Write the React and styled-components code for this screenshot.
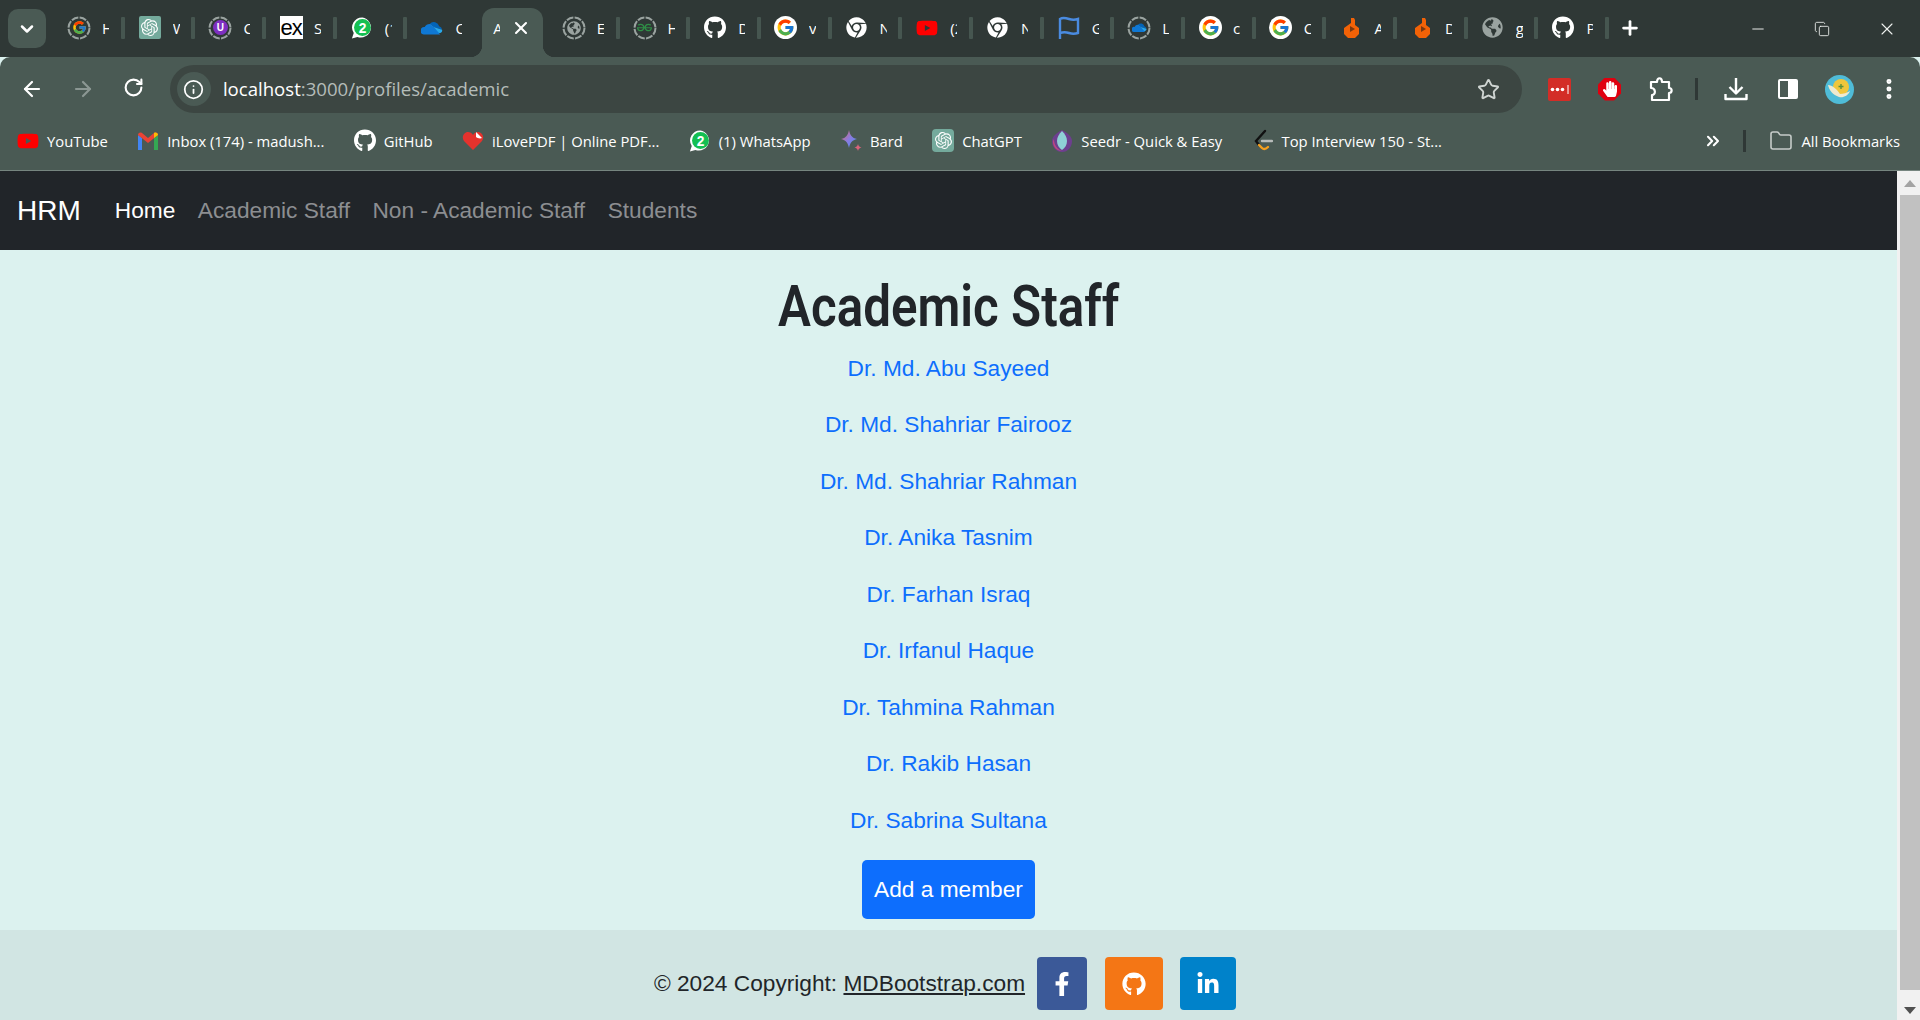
import React from "react";
import styled, { createGlobalStyle } from "styled-components";
import { FaChrome, FaFacebookF, FaGithub, FaLinkedinIn, FaGlobeAmericas, FaHandPaper, FaYoutube } from "react-icons/fa";
import { FcGoogle } from "react-icons/fc";
import { SiOpenai, SiGeeksforgeeks } from "react-icons/si";
import { ChevronDown, X, Plus, Minus, ArrowLeft, ArrowRight, RotateCw, Info, Star, MoreVertical, ChevronsRight, Folder, Copy } from "lucide-react";

const GlobalStyle = createGlobalStyle`
  html, body {
    margin: 0;
    height: 100%;
    overflow: hidden;
  }
  body {
    font-family: "Liberation Sans", Arial, sans-serif;
    background: #dcf2ef;
  }
  * { box-sizing: border-box; }
`;

const Page = styled.div`
  display: flex;
  flex-direction: column;
  height: 1020px;
`;

/* tab strip */
const TabStrip = styled.div`
  display: flex;
  align-items: flex-end;
  height: 57px;
  background: #2f3836;
  padding-left: 8px;
  color: #fff;
`;

const TabMenu = styled.div`
  width: 38px;
  height: 39px;
  margin: 0 8px 9px 0;
  border-radius: 10px;
  background: #4a5a54;
  display: flex;
  align-items: center;
  justify-content: center;
`;

const Tab = styled.div`
  width: 70.7px;
  height: 49px;
  display: flex;
  align-items: center;
  padding: 0 0 10px 14px;
  position: relative;
  &::after {
    content: "";
    display: ${(p) => (p.$nosep ? "none" : "block")};
    position: absolute;
    right: 0;
    top: 9px;
    width: 4px;
    height: 22px;
    border-radius: 1px;
    background: #465650;
  }
`;

const ActiveTab = styled.div`
  width: 61px;
  height: 49px;
  margin: 0 5.7px 0 4px;
  background: #4a5a54;
  border-radius: 12px 12px 0 0;
  display: flex;
  align-items: center;
  padding: 0 0 10px 11px;
  gap: 11px;
  position: relative;
  &::before, &::after {
    content: "";
    position: absolute;
    bottom: 0;
    width: 12px;
    height: 12px;
  }
  &::before { left: -12px; background: radial-gradient(circle at 0 0, transparent 12px, #4a5a54 12.5px); }
  &::after { right: -12px; background: radial-gradient(circle at 100% 0, transparent 12px, #4a5a54 12.5px); }
`;

const TabIconBox = styled.span`
  width: 22px;
  height: 22px;
  flex: none;
  display: flex;
  align-items: center;
  justify-content: center;
  position: relative;
`;

const TabLabel = styled.span`
  width: 7px;
  margin-left: 12px;
  overflow: hidden;
  white-space: nowrap;
  font: 15px "Open Sans", sans-serif;
  color: #fff;
`;

const ActiveLabel = styled(TabLabel)`
  margin-left: 0;
`;

const WhiteDisc = styled.span`
  width: 23px;
  height: 23px;
  flex: none;
  border-radius: 50%;
  background: #fff;
  display: flex;
  align-items: center;
  justify-content: center;
`;

const GptSquare = styled.span`
  width: 22px;
  height: 23px;
  flex: none;
  border-radius: ${(p) => p.$r || 2}px;
  background: #74aa9c;
  display: flex;
  align-items: center;
  justify-content: center;
  color: #fff;
`;

const ExSquare = styled.span`
  width: 23px;
  height: 23px;
  flex: none;
  background: #fff;
  color: #000;
  font: 22px/23px "Liberation Sans", sans-serif;
  letter-spacing: -1px;
  text-align: center;
`;

const PurpleBadge = styled.span`
  width: 15px;
  height: 15px;
  border-radius: 50%;
  background: #7e2fc0;
  color: #fff;
  font: bold 10px/15px "Liberation Sans", sans-serif;
  text-align: center;
`;

const Ring = styled.svg`
  position: absolute;
  left: -1px;
  top: -1px;
`;

const TabSpacer = styled.div`
  flex: 1;
`;

const NewTab = styled.div`
  display: flex;
  padding: 0 0 18px 10px;
`;

const WindowButtons = styled.div`
  display: flex;
  align-items: center;
  gap: 47px;
  height: 57px;
  padding: 0 23px 0 0;
  align-self: flex-start;
`;

/* toolbar */
const Toolbar = styled.div`
  display: flex;
  align-items: center;
  height: 56px;
  background: #4a5a54;
  border-radius: 10px 10px 0 0;
  padding-top: 8px;
`;

const NavButton = styled.span`
  width: 51px;
  display: flex;
  justify-content: center;
  color: ${(p) => (p.$dim ? "#8b9793" : "#fff")};
`;

const NavButtons = styled.div`
  display: flex;
  width: 170px;
  padding-left: 6px;
`;

const Omnibox = styled.div`
  width: 1353px;
  height: 48px;
  border-radius: 24px;
  background: #3c4642;
  display: flex;
  align-items: center;
  padding: 0 22px 0 7px;
`;

const InfoChip = styled.span`
  width: 34px;
  height: 34px;
  border-radius: 50%;
  background: #4a5a54;
  display: flex;
  align-items: center;
  justify-content: center;
  color: #fff;
`;

const Url = styled.div`
  flex: 1;
  margin: 0 0 2px 12px;
  font: 18.6px "Open Sans", sans-serif;
  color: #b4bcb9;
  b { font-weight: 400; color: #fff; }
`;

const Extensions = styled.div`
  flex: 1;
  display: flex;
  align-items: center;
  padding-left: 25px;
`;

const ExtSlot = styled.span`
  width: ${(p) => p.$w}px;
  flex: none;
  display: flex;
  justify-content: center;
  align-items: center;
  color: #fff;
`;

const AdBlock = styled.span`
  width: 23px;
  height: 23px;
  background: #e0000f;
  clip-path: polygon(30% 0, 70% 0, 100% 30%, 100% 70%, 70% 100%, 30% 100%, 0 70%, 0 30%);
  display: flex;
  align-items: center;
  justify-content: center;
  color: #fff;
`;

const Divider = styled.span`
  width: 3px;
  height: 22px;
  flex: none;
  background: #2f3836;
`;

const SidePanel = styled.span`
  width: 20px;
  height: 20px;
  border: 2px solid #fff;
  border-radius: 2px;
  background: linear-gradient(90deg, transparent 50%, #fff 50%);
`;

/* bookmarks */
const Bookmarks = styled.div`
  display: flex;
  align-items: center;
  height: 58px;
  background: #4a5a54;
  border-bottom: 1px solid #76857f;
  padding: 0 20px 2px 17px;
  color: #fff;
  font: 14.8px "Open Sans", sans-serif;
  gap: 29.4px;
`;

const Bookmark = styled.div`
  display: flex;
  align-items: center;
  gap: 8px;
  white-space: nowrap;
`;

const BookmarkIcon = styled.span`
  width: 22px;
  height: 22px;
  flex: none;
  display: flex;
  align-items: center;
  justify-content: center;
`;

const BookmarkEnd = styled.div`
  margin-left: auto;
  display: flex;
  align-items: center;
  gap: 10px;
`;

const MoreBookmarks = styled.span`
  display: flex;
  margin-right: -4px;
`;

/* page body */
const Viewport = styled.div`
  flex: 1;
  display: flex;
  min-height: 0;
`;

const Content = styled.div`
  flex: 1;
  display: flex;
  flex-direction: column;
`;

const Navbar = styled.nav`
  height: 79px;
  background: #212529;
  display: flex;
  align-items: center;
  padding-left: 17px;
`;

const Brand = styled.a`
  font-size: 28px;
  color: #fff;
  margin-right: 34px;
`;

const NavItems = styled.div`
  display: flex;
  gap: 22.5px;
`;

const NavItem = styled.a`
  font-size: 22.7px;
  color: ${(p) => (p.$active ? "#fff" : "#8c8e91")};
`;

const Main = styled.main`
  flex: 1;
  background: #dcf2ef;
  display: flex;
  flex-direction: column;
  align-items: center;
`;

const Title = styled.h1`
  margin: 21px 0 0;
  font: 600 58px/70px Roboto, sans-serif;
  color: #212529;
  transform: scaleX(0.85);
`;

const StaffList = styled.div`
  display: flex;
  flex-direction: column;
  align-items: center;
  margin-top: 12px;
`;

const StaffLink = styled.a`
  height: 56.45px;
  font-size: 22.7px;
  line-height: 30px;
  color: #0d6efd;
`;

const AddButton = styled.button`
  width: 173px;
  height: 59px;
  margin-top: -1px;
  border: 0;
  border-radius: 5px;
  background: #0d6efd;
  color: #fff;
  font: 22.7px "Liberation Sans", sans-serif;
`;

const Footer = styled.footer`
  height: 90px;
  background: #d1e5e3;
  display: flex;
  align-items: center;
  justify-content: center;
  padding: 17px 7px 0 0;
  color: #212529;
  font-size: 22.7px;
  a { color: #212529; text-decoration: underline; }
`;

const Social = styled.span`
  width: ${(p) => p.$w}px;
  height: 53px;
  margin-left: ${(p) => p.$ml}px;
  border-radius: 4px;
  background: ${(p) => p.$bg};
  color: #fff;
  display: flex;
  align-items: center;
  justify-content: center;
`;

const Scrollbar = styled.div`
  width: 23px;
  background: #f1f1f1;
  display: flex;
  flex-direction: column;
  align-items: center;
  padding: 9px 0 0 2px;
`;

const ScrollUp = styled.span`
  width: 0;
  height: 0;
  border-left: 6px solid transparent;
  border-right: 6px solid transparent;
  border-bottom: 7px solid #a3a3a3;
`;

const ScrollThumb = styled.div`
  width: 20px;
  flex: 1;
  margin: 8px 0 17px;
  background: #c1c1c1;
`;

const ScrollDown = styled.span`
  width: 0;
  height: 0;
  margin-bottom: 6px;
  border-left: 6px solid transparent;
  border-right: 6px solid transparent;
  border-top: 7px solid #505050;
`;

function Ringed({ children }) {
  return (
    <TabIconBox>
      <Ring width="24" height="24" viewBox="0 0 24 24" fill="none">
        <circle cx="12" cy="12" r="10.5" stroke="#9aa3a0" strokeWidth="2" strokeDasharray="7 1.3" />
      </Ring>
      {children}
    </TabIconBox>
  );
}

const Google = () => <WhiteDisc><FcGoogle size={19} /></WhiteDisc>;

function Cloud({ size = 22 }) {
  return (
    <svg width={size} height={size} viewBox="0 0 24 24">
      <path d="M9.5 7.500a6 6 0 0 1 10.300 2.600A4.500 4.500 0 0 1 23 14l-9-3z" fill="#0364b8" />
      <path d="M9.500 7.500 14 11l9 3c.6 1.600-.4 3-2 3.500H12z" fill="#28a8ea" />
      <path d="M9.500 7.500A6.500 6.500 0 0 0 4 11a4 4 0 0 0-1 8h18L14 11z" fill="#0f78d4" />
    </svg>
  );
}

function Whats({ size = 24 }) {
  return (
    <svg width={size} height={size} viewBox="0 0 24 24">
      <path d="M12.500 .5A11 11 0 0 0 3 17.500L1 23.500l6-1.800A11 11 0 1 0 12.500 .5z" fill="#fff" />
      <circle cx="12.500" cy="11.500" r="9.200" fill="#14bf52" />
      <text x="12.500" y="17" textAnchor="middle" fontSize="15" fontWeight="700" fontFamily="Liberation Sans" fill="#fff">2</text>
    </svg>
  );
}

function OrangeBolt() {
  return (
    <svg width="15" height="20" viewBox="0 0 15 20">
      <path d="M7 0h3l1 2v5l4 3v6l-4 4H4l-4-4v-6l7-5z" fill="#f26207" />
      <path d="M6 8l5 3-5 3z" fill="#7a3810" />
    </svg>
  );
}

function Flag() {
  return (
    <svg width="22" height="24" viewBox="0 0 22 24" fill="none" stroke="#4a8be0" strokeWidth="2.4">
      <path d="M2 23V3c3-2 6-1 9 0s6 1 9 0v14c-3 1-6 1-9 0s-6-1-9 0" />
    </svg>
  );
}

function Gmail() {
  return (
    <svg width="22" height="18" viewBox="0 0 22 18" fill="none">
      <path d="M1 18V3l4 3v12z" fill="#4285f4" />
      <path d="M21 18V3l-4 3v12z" fill="#34a853" />
      <path d="M1 3c0-2 2-3 4-2l6 5 6-5c2-1 4 0 4 2l-10 8z" fill="#ea4335" />
      <path d="M17 1c2-1 4 0 4 2l-4 3z" fill="#fbbc04" />
    </svg>
  );
}

function Bard() {
  return (
    <svg width="22" height="24" viewBox="0 0 22 24">
      <defs>
        <linearGradient id="bard" x1="0" y1="0" x2="1" y2="1">
          <stop offset="0" stopColor="#e0695c" />
          <stop offset="0.5" stopColor="#8a7be0" />
          <stop offset="1" stopColor="#4b8ff0" />
        </linearGradient>
      </defs>
      <path d="M9 1c1 5 3 8 8 9-5 1-7 4-8 9-1-5-3-8-8-9 5-1 7-4 8-9z" fill="url(#bard)" />
      <path d="M18 15c.4 2 1.400 3 3.500 3.500-2.100.5-3.100 1.500-3.500 3.500-.4-2-1.400-3-3.500-3.500 2.100-.5 3.100-1.500 3.500-3.500z" fill="#d8637a" />
    </svg>
  );
}

function Seedr() {
  return (
    <svg width="20" height="22" viewBox="0 0 20 22">
      <path d="M10 0c6 3 10 7 10 11 0 6-4 11-10 11S0 17 0 11C0 7 4 3 10 0z" fill="#6d3f8f" />
      <path d="M2 9c0 6 3 10 8 12-5 0-9-4-9-9 0-1 .4-2 1-3z" fill="#c0487f" />
      <path d="M10 1c3 3 5 6 5 10 0 4-2 7-5 9-3-2-5-5-5-9 0-4 2-7 5-10z" fill="#8fd0d6" />
    </svg>
  );
}

function PdfHeart() {
  return (
    <svg width="22" height="20" viewBox="0 0 22 20">
      <path d="M11 19L2 10C-1 6 2 1 6 1c2 0 4 1 5 3 1-2 3-3 5-3 4 0 7 5 4 9z" fill="#e5322d" />
      <path d="M14 1l6 6c-2 1-5 0-6-1z" fill="#fff" />
    </svg>
  );
}

function LeetCode() {
  return (
    <svg width="20" height="24" viewBox="0 0 20 24" fill="none" strokeWidth="2.4" strokeLinecap="round">
      <path d="M12 2L3 12l3 4" stroke="#111" />
      <path d="M6 16l3 3c2 2 4 1 6-1" stroke="#f7a01e" />
      <path d="M9 12h10" stroke="#b8bcba" />
    </svg>
  );
}

function LastPass() {
  return (
    <svg width="23" height="23" viewBox="0 0 23 23">
      <rect width="23" height="23" rx="2" fill="#d32d27" />
      <circle cx="4.500" cy="11.500" r="1.800" fill="#fff" />
      <circle cx="9.500" cy="11.500" r="1.800" fill="#fff" />
      <circle cx="14.500" cy="11.500" r="1.800" fill="#fff" />
      <path d="M20 7v9" stroke="#fff" strokeWidth="1" />
    </svg>
  );
}

function ExtensionIcon() {
  return (
    <svg width="25" height="26" viewBox="0 0 25 26" fill="none" stroke="#fff" strokeWidth="2.2" strokeLinejoin="round">
      <path d="M2 6h6c0-5 5-5 5 0h7v6c3.500 0 3.500 5 0 5v7H3v-5c4 0 4-7-1-7z" />
    </svg>
  );
}

function DownloadIcon() {
  return (
    <svg width="24" height="24" viewBox="0 0 24 24" fill="none" stroke="#fff" strokeWidth="2.400" strokeLinejoin="round">
      <path d="M12 1v15M5.500 10l6.500 6.500 6.500-6.500M1.500 17v5h21v-5" />
    </svg>
  );
}

function Avatar() {
  return (
    <svg width="29" height="29" viewBox="0 0 29 29">
      <circle cx="14.500" cy="14.500" r="14.500" fill="#4fbcd8" />
      <circle cx="16" cy="12" r="8" fill="#f0c63a" />
      <path d="M3 10c4 0 9 4 12 9 3 0 7-1 10-3-2 5-7 7-11 6C8 20 4 15 3 10z" fill="#efe9cf" />
      <path d="M16 9v5M13.500 11.500h5" stroke="#5a8f3a" strokeWidth="1.400" />
    </svg>
  );
}

const tabs = [
  { icon: <Ringed><FcGoogle size={15} /></Ringed>, label: "How" },
  { icon: <GptSquare><SiOpenai size={17} /></GptSquare>, label: "What" },
  { icon: <Ringed><PurpleBadge>U</PurpleBadge></Ringed>, label: "Create" },
  { icon: <ExSquare>ex</ExSquare>, label: "Sign" },
  { icon: <Whats />, label: "(1) Wh" },
  { icon: <Cloud />, label: "OneDrive" },
  { active: true, label: "Academic" },
  { icon: <Ringed><FaGlobeAmericas size={14} color="#9aa3a0" /></Ringed>, label: "Error" },
  { icon: <Ringed><SiGeeksforgeeks size={15} color="#2f8d46" /></Ringed>, label: "How" },
  { icon: <FaGithub size={23} />, label: "Dep" },
  { icon: <Google />, label: "vite" },
  { icon: <FaChrome size={21} />, label: "New" },
  { icon: <FaYoutube size={26} color="#f00" />, label: "(2) Y" },
  { icon: <FaChrome size={21} />, label: "New" },
  { icon: <Flag />, label: "Get" },
  { icon: <Ringed><Cloud size={15} /></Ringed>, label: "Login" },
  { icon: <Google />, label: "css" },
  { icon: <Google />, label: "CSS" },
  { icon: <OrangeBolt />, label: "All" },
  { icon: <OrangeBolt />, label: "Dash" },
  { icon: <FaGlobeAmericas size={21} color="#9aa3a0" />, label: "get" },
  { icon: <FaGithub size={23} />, label: "Pull" },
];

const bookmarks = [
  { icon: <FaYoutube size={26} color="#f00" />, label: "YouTube" },
  { icon: <Gmail />, label: "Inbox (174) - madush..." },
  { icon: <FaGithub size={23} />, label: "GitHub" },
  { icon: <PdfHeart />, label: "iLovePDF | Online PDF..." },
  { icon: <Whats />, label: "(1) WhatsApp" },
  { icon: <Bard />, label: "Bard" },
  { icon: <GptSquare $r={4}><SiOpenai size={17} /></GptSquare>, label: "ChatGPT" },
  { icon: <Seedr />, label: "Seedr - Quick & Easy" },
  { icon: <LeetCode />, label: "Top Interview 150 - St..." },
];

const staff = [
  "Dr. Md. Abu Sayeed",
  "Dr. Md. Shahriar Fairooz",
  "Dr. Md. Shahriar Rahman",
  "Dr. Anika Tasnim",
  "Dr. Farhan Israq",
  "Dr. Irfanul Haque",
  "Dr. Tahmina Rahman",
  "Dr. Rakib Hasan",
  "Dr. Sabrina Sultana",
];

export default function App() {
  return (
    <Page>
      <GlobalStyle />
      <TabStrip>
        <TabMenu><ChevronDown size={20} color="#fff" strokeWidth={3} /></TabMenu>
        {tabs.map((t, i) =>
          t.active ? (
            <ActiveTab key={i}>
              <ActiveLabel>{t.label}</ActiveLabel>
              <X size={20} color="#fff" strokeWidth={2.5} />
            </ActiveTab>
          ) : (
            <Tab key={i} $nosep={i === 5}>
              <TabIconBox>{t.icon}</TabIconBox>
              <TabLabel>{t.label}</TabLabel>
            </Tab>
          )
        )}
        <NewTab><Plus size={22} color="#fff" strokeWidth={3} /></NewTab>
        <TabSpacer />
        <WindowButtons>
          <Minus size={18} color="#eef1ef" strokeWidth={1.3} />
          <Copy size={16} color="#eef1ef" strokeWidth={1.3} />
          <X size={20} color="#eef1ef" strokeWidth={1.3} />
        </WindowButtons>
      </TabStrip>
      <Toolbar>
        <NavButtons>
          <NavButton><ArrowLeft size={24} strokeWidth={2.2} /></NavButton>
          <NavButton $dim><ArrowRight size={24} strokeWidth={2.2} /></NavButton>
          <NavButton><RotateCw size={21} strokeWidth={2.4} /></NavButton>
        </NavButtons>
        <Omnibox>
          <InfoChip><Info size={21} strokeWidth={2} /></InfoChip>
          <Url><b>localhost</b>:3000/profiles/academic</Url>
          <Star size={23} color="#cfd5d2" strokeWidth={2} />
        </Omnibox>
        <Extensions>
          <ExtSlot $w={25}><LastPass /></ExtSlot>
          <ExtSlot $w={75}><AdBlock><FaHandPaper size={16} /></AdBlock></ExtSlot>
          <ExtSlot $w={28}><ExtensionIcon /></ExtSlot>
          <ExtSlot $w={42}><Divider /></ExtSlot>
          <ExtSlot $w={38}><DownloadIcon /></ExtSlot>
          <ExtSlot $w={65}><SidePanel /></ExtSlot>
          <ExtSlot $w={38}><Avatar /></ExtSlot>
          <ExtSlot $w={62}><MoreVertical size={26} strokeWidth={2.6} /></ExtSlot>
        </Extensions>
      </Toolbar>
      <Bookmarks>
        {bookmarks.map((b) => (
          <Bookmark key={b.label}>
            <BookmarkIcon>{b.icon}</BookmarkIcon>
            {b.label}
          </Bookmark>
        ))}
        <BookmarkEnd>
          <MoreBookmarks><ChevronsRight size={20} strokeWidth={2.5} /></MoreBookmarks>
          <ExtSlot $w={30}><Divider /></ExtSlot>
          <Bookmark><Folder size={24} strokeWidth={1.6} color="#c6ccc9" />All Bookmarks</Bookmark>
        </BookmarkEnd>
      </Bookmarks>
      <Viewport>
        <Content>
          <Navbar>
            <Brand>HRM</Brand>
            <NavItems>
              <NavItem $active>Home</NavItem>
              <NavItem>Academic Staff</NavItem>
              <NavItem>Non - Academic Staff</NavItem>
              <NavItem>Students</NavItem>
            </NavItems>
          </Navbar>
          <Main>
            <Title>Academic Staff</Title>
            <StaffList>
              {staff.map((name) => (
                <StaffLink key={name}>{name}</StaffLink>
              ))}
            </StaffList>
            <AddButton>Add a member</AddButton>
          </Main>
          <Footer>
            <span>© 2024 Copyright: <a>MDBootstrap.com</a></span>
            <Social $w={50} $ml={12} $bg="#3b5998"><FaFacebookF size={24} /></Social>
            <Social $w={58} $ml={18} $bg="#f47615"><FaGithub size={24} /></Social>
            <Social $w={56} $ml={17} $bg="#0082ca"><FaLinkedinIn size={24} /></Social>
          </Footer>
        </Content>
        <Scrollbar>
          <ScrollUp />
          <ScrollThumb />
          <ScrollDown />
        </Scrollbar>
      </Viewport>
    </Page>
  );
}
